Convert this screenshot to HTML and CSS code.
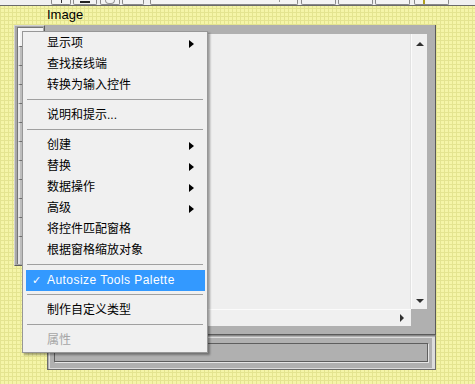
FILE: index.html
```html
<!DOCTYPE html>
<html>
<head>
<meta charset="utf-8">
<link rel="stylesheet" href="styles.css">
</head>
<body>
<div class="toolbar">
  <div class="tb-btn w20"><span class="tb-mark"></span></div>
  <div class="tb-btn w24 g2"><span class="tb-bar"></span></div>
  <div class="tb-btn w20 g3"><span class="tb-round"></span></div>
  <div class="tb-btn w22 g2"></div>
  <div class="tb-btn w148 g6"><span class="tb-tick"></span></div>
  <div class="tb-btn w35 g3"></div>
  <div class="tb-btn w35 g2"></div>
  <div class="tb-btn w35 g2"></div>
  <div class="tb-btn w35 g4"><span class="tb-icon"></span></div>
</div>
<div class="label">Image</div>
<div class="workspace">
  <div class="palette">
    <div class="pal-inner">
      <div class="pal-btn first"><span class="dot"></span></div>
      <div class="pal-btn"><span class="dot"></span></div>
      <div class="pal-btn"></div>
      <div class="pal-btn"></div>
      <div class="pal-btn"></div>
      <div class="pal-btn"></div>
      <div class="pal-btn"></div>
      <div class="pal-btn"></div>
      <div class="pal-btn"></div>
      <div class="pal-btn"></div>
      <div class="pal-btn"></div>
      <div class="pal-btn last"></div>
    </div>
  </div>
  <div class="frame">
    <div class="image-area"></div>
    <div class="vscroll"><span class="arr-up"></span><span class="arr-down"></span></div>
    <div class="hscroll"><span class="arr-right"></span></div>
    <div class="corner"></div>
  </div>
</div>
<div class="bottom-panel"><div class="bp-inner"></div></div>

<div class="menu">
  <div class="item"><span class="gut"></span><span class="txt">显示项</span><span class="sub"></span></div>
  <div class="item"><span class="gut"></span><span class="txt">查找接线端</span></div>
  <div class="item"><span class="gut"></span><span class="txt">转换为输入控件</span></div>
  <div class="sep"></div>
  <div class="item"><span class="gut"></span><span class="txt">说明和提示...</span></div>
  <div class="sep"></div>
  <div class="item"><span class="gut"></span><span class="txt">创建</span><span class="sub"></span></div>
  <div class="item"><span class="gut"></span><span class="txt">替换</span><span class="sub"></span></div>
  <div class="item"><span class="gut"></span><span class="txt">数据操作</span><span class="sub"></span></div>
  <div class="item"><span class="gut"></span><span class="txt">高级</span><span class="sub"></span></div>
  <div class="item"><span class="gut"></span><span class="txt">将控件匹配窗格</span></div>
  <div class="item"><span class="gut"></span><span class="txt">根据窗格缩放对象</span></div>
  <div class="sep"></div>
  <div class="item active"><span class="gut">✓</span><span class="txt latin">Autosize Tools Palette</span></div>
  <div class="sep"></div>
  <div class="item"><span class="gut"></span><span class="txt">制作自定义类型</span></div>
  <div class="sep"></div>
  <div class="item disabled"><span class="gut"></span><span class="txt">属性</span></div>
</div>
</body>
</html>
```
FILE: styles.css
```css
html, body {
  margin: 0;
  padding: 0;
}
body {
  width: 475px;
  height: 384px;
  overflow: hidden;
  position: relative;
  font-family: "Liberation Sans", "Noto Sans CJK SC", sans-serif;
  background-color: #f5f5a8;
  background-image:
    linear-gradient(to right, #e4e490 1px, transparent 1px),
    linear-gradient(to bottom, #e4e490 1px, transparent 1px);
  background-size: 4px 4px;
}

/* toolbar */
.toolbar {
  height: 5px;
  background: #f0f0f0;
  border-bottom: 1px solid #6a6a6a;
  display: flex;
  padding-left: 51px;
}
.tb-btn {
  box-sizing: border-box;
  height: 5px;
  border: 1px solid #8a8a8a;
  border-top: none;
  border-radius: 0 0 2px 2px;
  background: #f4f4f4;
  position: relative;
  display: flex;
  justify-content: center;
  align-items: flex-end;
}
.w20 { width: 20px; }
.w22 { width: 22px; }
.w24 { width: 24px; }
.w35 { width: 35px; }
.w148 { width: 148px; }
.g2 { margin-left: 2px; }
.g3 { margin-left: 3px; }
.g4 { margin-left: 4px; }
.g6 { margin-left: 6px; }
.tb-mark { width: 1px; height: 3px; background: #333; margin-bottom: 1px; }
.tb-bar { width: 10px; height: 2px; background: #222; margin-bottom: 1px; }
.tb-round { width: 8px; height: 3px; border: 1px solid #999; border-top: none; border-radius: 0 0 4px 4px; margin-bottom: 0; }
.tb-tick { width: 1px; height: 2px; background: #999; margin-left: 110px; margin-bottom: 2px; }
.tb-icon { width: 2px; height: 4px; background: #b0a020; margin-right: 16px; }

/* label */
.label {
  margin: 1px 0 0 47px;
  height: 15px;
  line-height: 15px;
  font-size: 13px;
  color: #000;
}

/* workspace */
.workspace {
  display: flex;
  align-items: flex-start;
  margin: 3px 0 0 14px;
  height: 310px;
}
.palette {
  box-sizing: border-box;
  width: 31px;
  height: 241px;
  border: 1px solid;
  border-color: #d2d2d2 #5e5e5e #5e5e5e #d2d2d2;
  background: #a8a8a8;
  padding: 1px 1px 1px 2px;
}
.pal-inner {
  box-sizing: border-box;
  height: 100%;
  border-left: 1px solid #767676;
  border-top: 1px solid #767676;
  padding-left: 0;
  display: flex;
  flex-direction: column;
}
.pal-btn {
  height: 18px;
  border-bottom: 1px solid #6e6e6e;
  border-left: 2px solid #e4e4e4;
  background: #bdbdbd;
  position: relative;
}
.pal-btn.first {
  background: #f2f2f2;
  border-left-color: #ffffff;
}
.pal-btn.last { flex: 1; border-bottom: none; }
.dot {
  display: block;
  width: 2px;
  height: 2px;
  background: #000;
  margin: 13px 0 0 3px;
}

.frame {
  box-sizing: border-box;
  width: 391px;
  height: 310px;
  background: #b0b0b0;
  border-right: 1px solid #5a5a5a;
  border-bottom: 1px solid #5a5a5a;
  padding: 9px 8px 8px 8px;
  display: grid;
  grid-template-columns: 1fr 16px;
  grid-template-rows: 1fr 17px;
}
.image-area {
  background: #efefef;
  border-right: 1px solid #e2e2e2;
}
.vscroll {
  background: #f0f0f0;
  border-left: 1px solid #fbfbfb;
  display: flex;
  flex-direction: column;
  justify-content: space-between;
  align-items: center;
  padding: 8px 0 6px;
}
.hscroll {
  background: #f0f0f0;
  border-top: 1px solid #fbfbfb;
  display: flex;
  justify-content: flex-end;
  align-items: center;
  padding-right: 7px;
}
.arr-up {
  width: 0; height: 0;
  border-left: 4px solid transparent;
  border-right: 4px solid transparent;
  border-bottom: 4px solid #303030;
}
.arr-down {
  width: 0; height: 0;
  border-left: 4px solid transparent;
  border-right: 4px solid transparent;
  border-top: 4px solid #303030;
}
.arr-right {
  width: 0; height: 0;
  border-top: 4px solid transparent;
  border-bottom: 4px solid transparent;
  border-left: 4px solid #303030;
}

.bottom-panel {
  box-sizing: border-box;
  margin-left: 47px;
  width: 389px;
  height: 35px;
  background: #b0b0b0;
  border: 1px solid #6c6c6c;
  border-top-color: #8a8a8a;
  box-shadow: inset 1px 1px 0 #b0b0b0, inset 2px 2px 0 #dcdcdc, inset -3px -1px 0 #dcdcdc;
  padding: 7px 7px 6px 6px;
}
.bp-inner {
  box-sizing: border-box;
  height: 19px;
  border: 1px solid #5e5e5e;
  border-right-color: #5e5e5e;
  box-shadow: 1px 1px 0 #e6e6e6;
}

/* context menu */
.menu {
  position: absolute;
  left: 22px;
  top: 31px;
  width: 186px;
  box-sizing: border-box;
  background: #f0f0f0;
  border: 1px solid #979797;
  padding: 1px 2px 1px 3px;
  box-shadow: 2px 2px 2px rgba(0, 0, 0, 0.35);
  font-size: 12px;
  color: #000;
}
.item {
  height: 21px;
  line-height: 21px;
  display: flex;
  align-items: center;
}
.gut {
  width: 21px;
  text-align: center;
  font-family: "DejaVu Sans", sans-serif;
  font-size: 11px;
}
.txt { flex: 1; white-space: nowrap; }
.latin { font-family: "Liberation Sans", sans-serif; font-size: 12px; letter-spacing: 0.45px; }
.sub {
  width: 0; height: 0;
  border-top: 4px solid transparent;
  border-bottom: 4px solid transparent;
  border-left: 5px solid #000;
  margin-right: 11px;
}
.item.active {
  background: #3399ff;
  color: #fff;
}
.item.disabled { color: #a6a6a6; }
.sep {
  height: 1px;
  background: #a0a0a0;
  margin: 3px 2px 5px 1px;
}
```
